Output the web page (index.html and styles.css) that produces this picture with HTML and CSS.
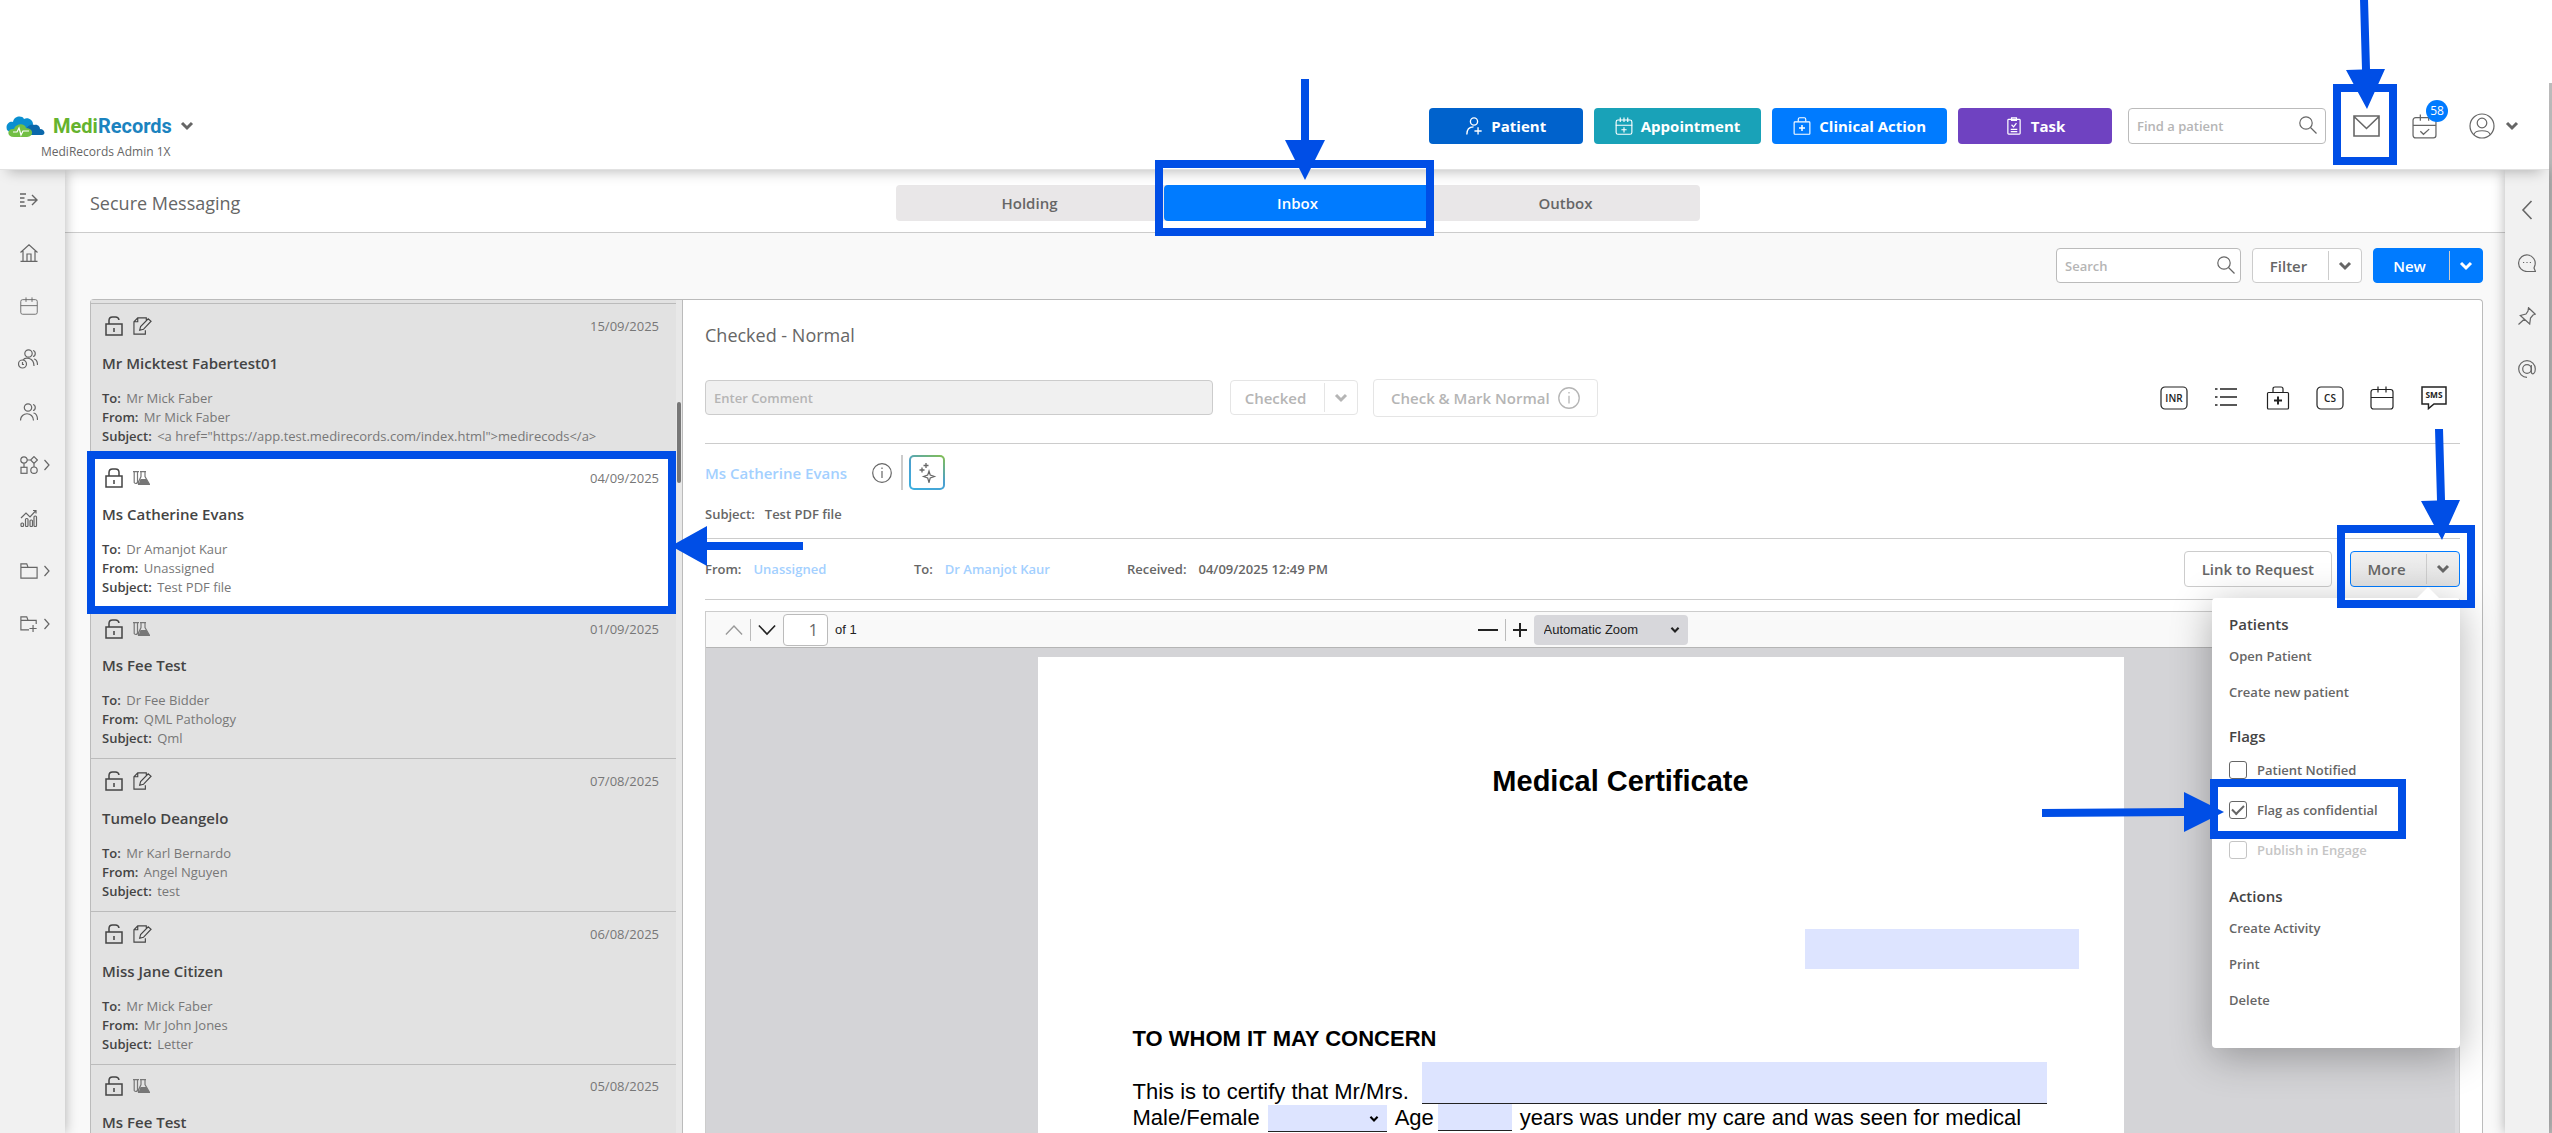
FILE: index.html
```html
<!DOCTYPE html>
<html lang="en">
<head>
    <meta charset="UTF-8">
    <meta name="viewport" content="width=device-width, initial-scale=1.0">
    <title>MediRecords - Secure Messaging</title>
    <link rel="stylesheet" href="styles.css">
</head>
<body>
    <!-- icon sprite -->
    <svg class="sprite" xmlns="http://www.w3.org/2000/svg">
        <symbol id="chevron" viewBox="0 0 14 10"><path d="M2 2l5 5 5-5" stroke-width="3"/></symbol>
        <symbol id="chevron-right" viewBox="0 0 6 12"><path d="M.5 1l4.500 5-4.500 5"/></symbol>
        <symbol id="expand" viewBox="0 0 18 14"><path d="M0 1h6M0 5h4.500M0 9h4.500M0 13h6M7.500 7h9.500M12 2l5 5-5 5" stroke-width="1.400"/></symbol>
        <symbol id="home" viewBox="0 0 18 18"><path d="M.5 8.500L9 .8l8.500 7.700M3 7v10M15 7v10M.5 17.300h17M7 17v-7h4v7"/></symbol>
        <symbol id="calendar" viewBox="0 0 24 24"><rect x="1" y="3.500" width="22" height="19.500" rx="2.500"/><path d="M1 11.500h22M8 .5v6M16 .5v6"/></symbol>
        <symbol id="calendar-check" viewBox="0 0 24 24"><rect x="1" y="3.500" width="22" height="19.500" rx="2.500"/><path d="M1 11h22M8 .5v6M16 .5v6M8 16.500l3 3 5.500-5"/></symbol>
        <symbol id="calendar-plus" viewBox="0 0 24 24"><rect x="1.500" y="4" width="21" height="19" rx="2.500"/><path d="M1 11h22M7 .5v6M12 .5v6M17 .5v6M12 13.500v7M8.500 17h7"/></symbol>
        <symbol id="users-clock" viewBox="0 0 20 20"><circle cx="10.500" cy="4.500" r="3.700"/><path d="M15 1.500c3 .5 3 5.500 0 6M5 11c2-3 11-3 11 6M16 10c2.500.5 3.500 3 3.500 6"/><circle cx="4.500" cy="15" r="4"/><path d="M4.500 13v2.500h1.500"/></symbol>
        <symbol id="users" viewBox="0 0 18 18"><circle cx="8" cy="4.500" r="3.700"/><path d="M13 1.500c3 .5 3 5.500 0 6M.5 17.500c0-9 13-9 13 0M13.500 10c3 .5 4 3 4 7"/></symbol>
        <symbol id="nodes" viewBox="0 0 18 18"><circle cx="4" cy="4" r="3.200"/><path d="M14 .6L17.400 4 14 7.400 10.600 4zM7 4h3.500M4 7.300V11M14 7.500V11"/><rect x="1" y="11.300" width="6" height="6"/><circle cx="14" cy="14.200" r="3.200"/></symbol>
        <symbol id="chart" viewBox="0 0 18 18"><path d="M1 9l5-5 4 4 5.500-6M13 1.500h3v3"/><rect x="1" y="14" width="2.500" height="3.500" rx="1"/><rect x="5.500" y="9.500" width="2.500" height="8" rx="1"/><rect x="10" y="11" width="2.500" height="6.500" rx="1"/><rect x="14" y="7" width="2.500" height="10.500" rx="1"/></symbol>
        <symbol id="folder" viewBox="0 0 20 18"><path d="M1 17V1h6.500l1.500 4h10v12zM1 5h8" stroke-width="1.300"/></symbol>
        <symbol id="folder-plus" viewBox="0 0 20 18"><path d="M10 15.500H1V1h6.500l1.500 4h9v4M1 5h8M14.500 10v8M10.500 14h8" stroke-width="1.300"/></symbol>
        <symbol id="user-plus" viewBox="0 0 18 20"><circle cx="9" cy="5" r="4"/><path d="M1 19.500c0-6 3-8.500 7.500-8.500M13.500 11.500v8M9.500 15.500h8"/></symbol>
        <symbol id="bag" viewBox="0 0 24 24"><rect x="1.500" y="6.500" width="21" height="16.500" rx="1"/><path d="M7 6V3q0-2 2-2h6q2 0 2 2v3"/><path d="M12 10.500v8M8 14.500h8" stroke-width="2"/></symbol>
        <symbol id="clipboard" viewBox="0 0 18 22"><rect x="1.500" y="3" width="15" height="18" rx="1"/><path d="M6 1h6v3H6zM6 9.500l2.500 2.500L12 7.500M5 15h8M5 18h8"/></symbol>
        <symbol id="search" viewBox="0 0 18 18"><circle cx="7" cy="7" r="6.200"/><path d="M11.500 11.500l6 6"/></symbol>
        <symbol id="mail" viewBox="0 0 27 22"><path d="M1 1h25v20H1zM1 1.500l12.500 12 12.500-12" stroke-width="1.600"/></symbol>
        <symbol id="user" viewBox="0 0 26 26"><circle cx="13" cy="13" r="12"/><circle cx="13" cy="10" r="4.800"/><path d="M5 21.500c1-5 15-5 16 0"/></symbol>
        <symbol id="back" viewBox="0 0 11 20"><path d="M10 1L1.500 10l8.500 9" stroke-width="1.600"/></symbol>
        <symbol id="chat" viewBox="0 0 18 18"><path d="M17.500 17.500h-8.500A8.300 8.300 0 1 1 17 11l-1 3zM5 8.500h1.200M8.400 8.500h1.200M11.800 8.500H13"/></symbol>
        <symbol id="pin" viewBox="0 0 18 18"><path d="M10.500.7l6.800 6.500-2.300.8-2.500 3-.8 6L2.300 8.500l5.700-1.500 2-3zM6.500 12L.5 17.500"/></symbol>
        <symbol id="at" viewBox="0 0 18 18"><circle cx="9" cy="9" r="4.300"/><path d="M13.300 5v7.500c1 2.500 4 1.500 4-3.500a8.300 8.300 0 1 0-8.300 8.300"/></symbol>
        <symbol id="lock" viewBox="0 0 18 20"><rect x="1" y="8" width="16" height="11" stroke-width="1.500"/><path d="M4 8V4.500q0-3.500 3.500-3.500h3q3.500 0 3.500 3.500V8M9 12v4" stroke-width="1.500"/></symbol>
        <symbol id="unlock" viewBox="0 0 18 20"><rect x="1" y="8" width="16" height="11" stroke-width="1.500"/><path d="M4 8V4.500q0-3.500 3.500-3.500h3q3 0 3.500 3M9 12v4" stroke-width="1.500"/></symbol>
        <symbol id="edit" viewBox="0 0 20 19"><path d="M14 4V1H5L1 5v13h12v-4M5 1v4H1M7 14l1-4 8-8 3 2.500-8 8.500z" stroke-width="1.200"/></symbol>
        <symbol id="flask" viewBox="0 0 17 14"><path d="M0 .7h6M1.200 1v10.500q1.500 2 3.300 0V1M7 .7h6M8 1v4.500L5.500 11v2.300h11L12 5.500V1" stroke-width="1.200"/><path class="solid" d="M7.500 8h6l3 5.500h-11z"/></symbol>
        <symbol id="info" viewBox="0 0 20 20"><circle cx="10" cy="10" r="9.300"/><path d="M10 8v7M10 4.500v1.500"/></symbol>
        <symbol id="sparkle" viewBox="0 0 16 20"><path d="M10 8l1.200 4 4.300 1.500-4.300 1.500L10 19.500 8.700 15l-4.200-1.500L8.700 12z"/><path d="M7 0v5M4.500 2.500h5M3 4.500v5M.5 7h5" stroke-width="1.300"/></symbol>
        <symbol id="inr" viewBox="0 0 28 24"><rect x="1" y="1" width="26" height="22" rx="4"/><text x="14" y="16" font-size="10">INR</text></symbol>
        <symbol id="cs" viewBox="0 0 28 24"><rect x="1" y="1" width="26" height="22" rx="4"/><text x="14" y="16" font-size="10">CS</text></symbol>
        <symbol id="sms" viewBox="0 0 28 26"><path d="M1 1h26v18.500H14l-6 5v-5H1z" stroke-width="1.600"/><text class="heavy" x="14" y="13.500" font-size="9">SMS</text></symbol>
        <symbol id="list" viewBox="0 0 22 20"><path d="M0 2h2.500M5 2h17M0 10h2.500M5 10h17M0 18h2.500M5 18h17" stroke-width="1.600"/></symbol>
        <symbol id="up" viewBox="0 0 20 12"><path d="M1 11l9-9.500 9 9.500" stroke-width="1.500"/></symbol>
        <symbol id="down" viewBox="0 0 20 12"><path d="M1 1l9 9.500L19 1" stroke-width="1.800"/></symbol>
        <symbol id="cloud" viewBox="0 0 39 21"><path fill="#0a8fd0" d="M1 14C-1 8 4 5 7 6 8 0 16-1 18 3c4-2 9 1 9 5l-3 10H6z"/><path fill="#0b68ab" d="M19 19c-1-6 5-12 9-10 4-1 6 2 6 4 5 0 6 6 2 6z"/><path fill="#72bf44" d="M8 21C0 21 1 12 8 13c2-6 11-6 12-1 8 0 8 9 1 9z"/><path d="M7 16h4l2-4 2 7 2-4h6" stroke="#fff" stroke-width="1.200"/></symbol>
    </svg>

    <div class="app">
        <header class="header">
            <div class="brand">
                <div class="brand-row">
                    <svg class="icon cloud"><use href="#cloud"/></svg>
                    <span class="brand-name"><span class="green">Medi</span>Records</span>
                    <button class="plain" aria-label="Switch practice"><svg class="icon chevron"><use href="#chevron"/></svg></button>
                </div>
                <div class="brand-sub">MediRecords Admin 1X</div>
            </div>
            <nav class="quick">
                <button class="btn-fill patient"><svg class="icon s18"><use href="#user-plus"/></svg>Patient</button>
                <button class="btn-fill appointment"><svg class="icon s18"><use href="#calendar-plus"/></svg>Appointment</button>
                <button class="btn-fill clinical"><svg class="icon s18"><use href="#bag"/></svg>Clinical Action</button>
                <button class="btn-fill task"><svg class="icon s18"><use href="#clipboard"/></svg>Task</button>
            </nav>
            <div class="search find">
                <input type="text" placeholder="Find a patient" aria-label="Find a patient">
                <svg class="icon s18"><use href="#search"/></svg>
            </div>
            <div class="header-icons">
                <a href="#" class="mail" aria-label="Messages">
                    <svg class="icon"><use href="#mail"/></svg>
                    <span class="callout callout-mail"></span>
                    <svg class="arrow arrow-mail" viewBox="0 0 40 110"><path d="M14 0h8l2 70h15L21 110 0 71l16-.5z"/></svg>
                </a>
                <a href="#" class="tasks" aria-label="Tasks">
                    <svg class="icon"><use href="#calendar-check"/></svg>
                    <span class="badge">58</span>
                </a>
                <button class="plain account" aria-label="Account">
                    <svg class="icon"><use href="#user"/></svg>
                    <svg class="icon chevron"><use href="#chevron"/></svg>
                </button>
            </div>
        </header>

        <div class="body">
            <nav class="rail rail-left">
                <a href="#" aria-label="Expand"><svg class="icon s18"><use href="#expand"/></svg></a>
                <a href="#" aria-label="Home"><svg class="icon s18"><use href="#home"/></svg></a>
                <a href="#" aria-label="Calendar"><svg class="icon s18"><use href="#calendar"/></svg></a>
                <a href="#" aria-label="Waiting room"><svg class="icon s20"><use href="#users-clock"/></svg></a>
                <a href="#" aria-label="Patients"><svg class="icon s18"><use href="#users"/></svg></a>
                <a href="#" aria-label="Clinical"><svg class="icon s18"><use href="#nodes"/></svg><svg class="icon more-arrow"><use href="#chevron-right"/></svg></a>
                <a href="#" aria-label="Reports"><svg class="icon s18"><use href="#chart"/></svg></a>
                <a href="#" aria-label="Folders"><svg class="icon s18"><use href="#folder"/></svg><svg class="icon more-arrow"><use href="#chevron-right"/></svg></a>
                <a href="#" aria-label="Add folder"><svg class="icon s18"><use href="#folder-plus"/></svg><svg class="icon more-arrow"><use href="#chevron-right"/></svg></a>
            </nav>

            <main class="main">
                <div class="title-bar">
                    <h1>Secure Messaging</h1>
                    <div class="tabs">
                        <button class="tab">Holding</button>
                        <button class="tab active">Inbox
                            <span class="callout callout-tab"></span>
                            <svg class="arrow arrow-tab" viewBox="0 0 40 101"><path d="M16 0h8v61h16L20 101 0 61h16z"/></svg>
                        </button>
                        <button class="tab">Outbox</button>
                    </div>
                </div>

                <div class="toolbar">
                    <div class="search">
                        <input type="text" placeholder="Search" aria-label="Search">
                        <svg class="icon s18"><use href="#search"/></svg>
                    </div>
                    <div class="split">
                        <button>Filter</button>
                        <button class="toggle" aria-label="Filter options"><svg class="icon chevron"><use href="#chevron"/></svg></button>
                    </div>
                    <div class="split primary">
                        <button>New</button>
                        <button class="toggle" aria-label="New options"><svg class="icon chevron"><use href="#chevron"/></svg></button>
                    </div>
                </div>

                <div class="card">
                    <div class="list">
                        <div class="messages">
                            <article class="message">
                                <div class="message-top">
                                    <svg class="icon lock"><use href="#unlock"/></svg>
                                    <svg class="icon edit"><use href="#edit"/></svg>
                                    <time>15/09/2025</time>
                                </div>
                                <h2>Mr Micktest Fabertest01</h2>
                                <p><b>To:</b> Mr Mick Faber</p>
                                <p><b>From:</b> Mr Mick Faber</p>
                                <p><b>Subject:</b> &lt;a href="https://app.test.medirecords.com/index.html"&gt;medirecods&lt;/a&gt;</p>
                            </article>
                            <article class="message selected">
                                <div class="message-top">
                                    <svg class="icon lock"><use href="#lock"/></svg>
                                    <svg class="icon flask"><use href="#flask"/></svg>
                                    <time>04/09/2025</time>
                                </div>
                                <h2>Ms Catherine Evans</h2>
                                <p><b>To:</b> Dr Amanjot Kaur</p>
                                <p><b>From:</b> Unassigned</p>
                                <p><b>Subject:</b> Test PDF file</p>
                                <span class="callout callout-message"></span>
                                <svg class="arrow arrow-message" viewBox="0 0 132 40"><path d="M0 20L36 0v16h96v8H36v16z"/></svg>
                            </article>
                            <article class="message">
                                <div class="message-top">
                                    <svg class="icon lock"><use href="#unlock"/></svg>
                                    <svg class="icon flask"><use href="#flask"/></svg>
                                    <time>01/09/2025</time>
                                </div>
                                <h2>Ms Fee Test</h2>
                                <p><b>To:</b> Dr Fee Bidder</p>
                                <p><b>From:</b> QML Pathology</p>
                                <p><b>Subject:</b> Qml</p>
                            </article>
                            <article class="message">
                                <div class="message-top">
                                    <svg class="icon lock"><use href="#unlock"/></svg>
                                    <svg class="icon edit"><use href="#edit"/></svg>
                                    <time>07/08/2025</time>
                                </div>
                                <h2>Tumelo Deangelo</h2>
                                <p><b>To:</b> Mr Karl Bernardo</p>
                                <p><b>From:</b> Angel Nguyen</p>
                                <p><b>Subject:</b> test</p>
                            </article>
                            <article class="message">
                                <div class="message-top">
                                    <svg class="icon lock"><use href="#unlock"/></svg>
                                    <svg class="icon edit"><use href="#edit"/></svg>
                                    <time>06/08/2025</time>
                                </div>
                                <h2>Miss Jane Citizen</h2>
                                <p><b>To:</b> Mr Mick Faber</p>
                                <p><b>From:</b> Mr John Jones</p>
                                <p><b>Subject:</b> Letter</p>
                            </article>
                            <article class="message">
                                <div class="message-top">
                                    <svg class="icon lock"><use href="#unlock"/></svg>
                                    <svg class="icon flask"><use href="#flask"/></svg>
                                    <time>05/08/2025</time>
                                </div>
                                <h2>Ms Fee Test</h2>
                            </article>
                        </div>
                        <div class="track"><div class="thumb"></div></div>
                    </div>

                    <section class="detail">
                        <h2 class="status">Checked - Normal</h2>
                        <div class="review">
                            <input class="comment" type="text" placeholder="Enter Comment" aria-label="Comment" disabled>
                            <div class="split disabled">
                                <button disabled>Checked</button>
                                <button class="toggle" aria-label="Checked options" disabled><svg class="icon chevron"><use href="#chevron"/></svg></button>
                            </div>
                            <button class="btn mark" disabled>Check &amp; Mark Normal<svg class="icon s22"><use href="#info"/></svg></button>
                            <div class="shortcuts">
                                <a href="#" aria-label="INR"><svg class="icon wide"><use href="#inr"/></svg></a>
                                <a href="#" aria-label="List"><svg class="icon s22"><use href="#list"/></svg></a>
                                <a href="#" aria-label="Clinical action"><svg class="icon s24"><use href="#bag"/></svg></a>
                                <a href="#" aria-label="CS"><svg class="icon wide"><use href="#cs"/></svg></a>
                                <a href="#" aria-label="Appointment"><svg class="icon s24"><use href="#calendar"/></svg></a>
                                <a href="#" aria-label="SMS"><svg class="icon wide"><use href="#sms"/></svg></a>
                            </div>
                        </div>
                        <div class="patient-row">
                            <div class="patient-name">
                                <a href="#">Ms Catherine Evans</a>
                                <svg class="icon s20"><use href="#info"/></svg>
                                <button class="ai" aria-label="AI summary"><svg class="icon s20"><use href="#sparkle"/></svg></button>
                            </div>
                            <p class="subject">Subject:<span>Test PDF file</span></p>
                        </div>
                        <div class="meta">
                            <span class="from">From:<a href="#">Unassigned</a></span>
                            <span class="to">To:<a href="#">Dr Amanjot Kaur</a></span>
                            <span>Received:<span class="value">04/09/2025 12:49 PM</span></span>
                            <button class="btn link">Link to Request</button>
                            <div class="more">
                                <div class="split open">
                                    <button>More</button>
                                    <button class="toggle" aria-label="More options"><svg class="icon chevron"><use href="#chevron"/></svg></button>
                                </div>
                                <span class="callout callout-more"></span>
                                <svg class="arrow arrow-more" viewBox="0 0 40 111"><path d="M14 0h8l2 71h15L21 111 0 72l16-.5z"/></svg>
                                <div class="menu">
                                    <h3>Patients</h3>
                                    <a href="#">Open Patient</a>
                                    <a href="#">Create new patient</a>
                                    <h3>Flags</h3>
                                    <label><input type="checkbox">Patient Notified</label>
                                    <label>
                                        <input type="checkbox" checked>Flag as confidential
                                        <span class="callout callout-flag"></span>
                                        <svg class="arrow arrow-flag" viewBox="0 0 182 40"><path d="M0 17l142-1V0l40 20-40 20V24L0 25z"/></svg>
                                    </label>
                                    <label class="off"><input type="checkbox" disabled>Publish in Engage</label>
                                    <h3>Actions</h3>
                                    <a href="#">Create Activity</a>
                                    <a href="#">Print</a>
                                    <a href="#">Delete</a>
                                </div>
                            </div>
                        </div>

                        <div class="viewer">
                            <div class="viewer-bar">
                                <div class="pager">
                                    <button class="plain dim" aria-label="Previous page"><svg class="icon step"><use href="#up"/></svg></button>
                                    <span class="sep"></span>
                                    <button class="plain" aria-label="Next page"><svg class="icon step"><use href="#down"/></svg></button>
                                    <input type="text" value="1" aria-label="Page">
                                    <span>of 1</span>
                                </div>
                                <div class="zoom">
                                    <button class="plain minus" aria-label="Zoom out"></button>
                                    <span class="sep"></span>
                                    <button class="plain plus" aria-label="Zoom in"></button>
                                    <div class="select">
                                        <select aria-label="Zoom"><option>Automatic Zoom</option></select>
                                        <svg class="icon caret"><use href="#chevron"/></svg>
                                    </div>
                                </div>
                            </div>
                            <div class="pages">
                                <div class="page">
                                    <h2>Medical Certificate</h2>
                                    <input class="date" type="text" aria-label="Date">
                                    <h3>TO WHOM IT MAY CONCERN</h3>
                                    <div class="line first">
                                        <label for="name">This is to certify that Mr/Mrs.</label>
                                        <input id="name" type="text">
                                    </div>
                                    <div class="line">
                                        <label for="sex">Male/Female</label>
                                        <div class="select sex">
                                            <select id="sex"><option></option></select>
                                            <svg class="icon caret"><use href="#chevron"/></svg>
                                        </div>
                                        <label for="age">Age</label>
                                        <input id="age" type="text">
                                        <span>years was under my care and was seen for medical</span>
                                    </div>
                                </div>
                            </div>
                        </div>
                    </section>
                </div>
            </main>

            <nav class="rail rail-right">
                <a href="#" aria-label="Open panel"><svg class="icon s20"><use href="#back"/></svg></a>
                <a href="#" aria-label="Chat"><svg class="icon s18"><use href="#chat"/></svg></a>
                <a href="#" aria-label="Pinned"><svg class="icon s18"><use href="#pin"/></svg></a>
                <a href="#" aria-label="Mentions"><svg class="icon s18"><use href="#at"/></svg></a>
            </nav>
        </div>
    </div>
</body>
</html>
```
FILE: styles.css
```css
* {
    box-sizing: border-box;
}
body {
    margin: 0;
    padding-top: 83px;
    height: 100vh;
    overflow: hidden;
    background: #fff;
    font-family: "Open Sans", "Noto Sans", sans-serif;
    font-size: 13px;
    color: #666;
}
h1, h2, h3, p {
    margin: 0;
}
a {
    color: inherit;
    text-decoration: none;
}
button, input, select {
    font-family: inherit;
    color: inherit;
}
button {
    cursor: pointer;
}
.plain {
    background: none;
    border: none;
    padding: 0;
    display: flex;
    align-items: center;
}

/* icons */
.sprite {
    display: none;
}
.icon {
    display: block;
    flex: none;
    fill: none;
    stroke: currentColor;
    stroke-width: 1.2;
}
symbol text {
    fill: currentColor;
    stroke: none;
    text-anchor: middle;
    font-weight: 600;
}
symbol .heavy {
    font-weight: 700;
}
symbol .solid {
    fill: currentColor;
    stroke: none;
}
.s18 { width: 18px; height: 18px; }
.s20 { width: 20px; height: 20px; }
.s22 { width: 22px; height: 22px; }
.s24 { width: 24px; height: 24px; }
.chevron {
    width: 14px;
    height: 10px;
}

/* layout */
.app {
    height: 100%;
    display: flex;
    flex-direction: column;
    border-right: 3px solid #bbb;
}
.body {
    flex: 1;
    min-height: 0;
    display: flex;
}
.main {
    flex: 1;
    min-width: 0;
    display: flex;
    flex-direction: column;
    background: #f9f9f9;
}

/* header */
.header {
    position: relative;
    z-index: 3;
    height: 87px;
    flex: none;
    display: flex;
    align-items: center;
    padding: 0 30px 0 6px;
    background: #fff;
    border-bottom: 1px solid #e2e2e2;
    box-shadow: 0 10px 12px -8px rgba(0, 0, 0, 0.25);
}
.brand {
    align-self: flex-start;
    margin-right: auto;
    padding-top: 31px;
}
.brand-row {
    display: flex;
    align-items: center;
    height: 24px;
    gap: 8px;
}
.cloud {
    width: 39px;
    height: 21px;
    stroke: none;
}
.brand-name {
    font-family: Roboto, sans-serif;
    font-size: 20px;
    font-weight: 700;
    color: #1b83bf;
}
.green {
    color: #65b32e;
}
.brand-sub {
    margin-top: 5px;
    padding-left: 35px;
    font-size: 12px;
    line-height: 18px;
}
.quick {
    display: flex;
    gap: 11px;
}
.btn-fill {
    display: flex;
    align-items: center;
    justify-content: center;
    gap: 8px;
    height: 36px;
    min-width: 154px;
    padding: 0 21px;
    border: none;
    border-radius: 4px;
    color: #fff;
    font-size: 15px;
    font-weight: 700;
}
.btn-fill .icon {
    stroke-width: 1.5;
}
.patient { background: #0062cc; }
.appointment { background: #19a2b8; }
.clinical { background: #007bff; }
.task { background: #6f42c1; }
.search {
    position: relative;
    width: 185px;
}
.search input {
    width: 100%;
    height: 35px;
    padding: 0 32px 0 8px;
    border: 1px solid #bbb;
    border-radius: 4px;
    background: #fff;
    font-size: 13px;
}
.search .icon {
    position: absolute;
    right: 6px;
    top: 8px;
}
.find {
    width: 198px;
    margin-left: 16px;
}
.find input {
    height: 36px;
}
.find .icon {
    right: 9px;
}
input::placeholder {
    color: #b5b5b5;
    font-weight: 600;
    opacity: 1;
}
.header-icons {
    display: flex;
    align-items: center;
    gap: 32px;
    margin-left: 27px;
}
.mail, .tasks {
    position: relative;
}
.mail .icon {
    width: 27px;
    height: 22px;
}
.tasks .icon {
    width: 25px;
    height: 25px;
}
.badge {
    position: absolute;
    left: 14px;
    top: -14px;
    width: 22px;
    height: 22px;
    border-radius: 50%;
    background: #007bff;
    color: #fff;
    font-size: 12px;
    line-height: 22px;
    text-align: center;
}
.account {
    gap: 10px;
}
.account .icon:first-child {
    width: 26px;
    height: 26px;
}

/* side rails */
.rail {
    position: relative;
    z-index: 2;
    flex: none;
    display: flex;
    flex-direction: column;
    background: #f1f1f1;
    box-shadow: 0 0 12px rgba(0, 0, 0, 0.3);
}
.rail a {
    display: flex;
    align-items: center;
    height: 53px;
}
.rail-left {
    width: 65px;
    padding: 3px 0 0 20px;
}
.rail-left a {
    gap: 6px;
}
.rail-left .s20 {
    margin-left: -2px;
}
.more-arrow {
    width: 6px;
    height: 12px;
}
.rail-right {
    width: 44px;
    padding-top: 13px;
}
.rail-right a {
    justify-content: center;
}

/* title bar and tabs */
.title-bar {
    display: grid;
    grid-template-columns: 1fr auto 1fr;
    align-items: center;
    height: 63px;
    padding: 4px 0 0 25px;
    background: #fff;
    border-bottom: 1px solid #ccc;
}
.title-bar h1, .status {
    font-size: 18px;
    font-weight: 400;
    line-height: 24px;
}
.tabs {
    display: flex;
    border-radius: 4px;
    background: #e9e7e8;
}
.tab {
    position: relative;
    width: 268px;
    height: 36px;
    border: none;
    border-radius: 4px;
    background: none;
    font-size: 15px;
    font-weight: 600;
}
.tab.active {
    background: #007bff;
    color: #fff;
}

/* toolbar */
.toolbar {
    display: flex;
    justify-content: flex-end;
    gap: 11px;
    padding: 15px 22px 16px;
}
.split, .btn {
    border: 1px solid #ccc;
    border-radius: 4px;
    background: #fff;
    font-size: 15px;
    font-weight: 600;
}
.split {
    display: flex;
    width: 110px;
    height: 35px;
}
.split button {
    flex: 1;
    padding: 0 4px 0 0;
    border: none;
    background: none;
    font-size: 15px;
    font-weight: 600;
}
.split .toggle {
    flex: 0 0 33px;
    display: flex;
    align-items: center;
    justify-content: center;
    margin: 2px 0;
    padding: 0;
    border-left: 1px solid #ccc;
}
.primary {
    background: #007bff;
    border-color: #007bff;
    color: #fff;
}
.disabled {
    width: 128px;
}
.disabled, .mark {
    border-color: #e5e5e5;
    color: #b5b5b5;
}
.split.disabled .toggle {
    border-color: #e5e5e5;
}

/* card */
.card {
    flex: 1;
    min-height: 0;
    display: flex;
    margin: 0 22px 0 25px;
    border: 1px solid #bbb;
    border-bottom: none;
    border-radius: 4px 4px 0 0;
    background: #fff;
}
.list {
    flex: 0 0 592px;
    display: flex;
    border-right: 1px solid #bbb;
}
.messages {
    flex: 1;
    overflow-y: clip;
    padding-top: 3px;
    background: #e2e2e2;
}
.track {
    width: 6px;
    padding: 102px 1px 0;
    background: #e8e8e8;
}
.thumb {
    height: 81px;
    border-radius: 2px;
    background: #777;
}
.message {
    position: relative;
    padding: 10px 17px 10px 11px;
    border-top: 1px solid #bbb;
}
.selected {
    background: #fff;
}
.message-top {
    display: flex;
    align-items: center;
    padding-left: 3px;
    color: #444;
}
.message-top time {
    margin-left: auto;
    line-height: 22px;
    color: #777;
}
.lock {
    width: 18px;
    height: 20px;
    margin-right: 10px;
}
.edit {
    width: 19px;
    height: 24px;
}
.flask {
    width: 17px;
    height: 14px;
    color: #777;
}
.message h2 {
    margin: 14px 0 15px;
    font-size: 15px;
    font-weight: 600;
    line-height: 22px;
    color: #444;
}
.message p {
    line-height: 19px;
    color: #777;
}
.message b {
    margin-right: 2px;
    font-weight: 600;
    color: #444;
}

/* message detail */
.detail {
    flex: 1;
    min-width: 0;
    display: flex;
    flex-direction: column;
    padding: 23px 22px 0;
    font-weight: 600;
}
.review {
    flex: none;
    display: flex;
    align-items: center;
    height: 97px;
    padding-top: 5px;
    border-bottom: 1px solid #ccc;
}
.comment {
    width: 508px;
    height: 35px;
    margin-right: 17px;
    padding: 0 8px;
    border: 1px solid #ccc;
    border-radius: 4px;
    background: #f0f0f0;
    font-size: 13px;
}
.btn {
    height: 36px;
    padding: 0 17px;
}
.mark {
    display: flex;
    align-items: center;
    gap: 8px;
    height: 38px;
    margin-left: 15px;
}
.shortcuts {
    display: flex;
    margin-left: auto;
    color: #222;
}
.shortcuts a {
    display: flex;
    justify-content: center;
    width: 52px;
}
.wide {
    width: 28px;
    height: 24px;
}
.patient-row {
    padding: 11px 0 15px;
    border-bottom: 1px solid #ccc;
}
.patient-name {
    display: flex;
    align-items: center;
    height: 35px;
    font-size: 15px;
}
.patient-name a, .meta > span a {
    color: #a3d0ff;
}
.patient-name > .icon {
    margin: 0 8px 0 25px;
}
.ai {
    position: relative;
    display: flex;
    align-items: center;
    justify-content: center;
    width: 36px;
    height: 35px;
    margin-left: 9px;
    border: 2px solid transparent;
    border-radius: 5px;
    background: linear-gradient(#fff, #fff) padding-box, linear-gradient(30deg, #3bb0e0, #4a9fd0 50%, #86c04c) border-box;
}
.ai::before {
    content: "";
    position: absolute;
    left: -10px;
    top: -2px;
    height: 35px;
    border-left: 2px solid #ccc;
}
.subject {
    margin-top: 15px;
    line-height: 18px;
}
.subject span {
    margin-left: 10px;
}
.meta {
    flex: none;
    display: flex;
    align-items: center;
    height: 61px;
    border-bottom: 1px solid #ccc;
}
.meta > span a, .meta .value {
    margin-left: 12px;
}
.from {
    width: 209px;
}
.to {
    width: 213px;
}
.link {
    margin: 0 18px 0 auto;
}
.more {
    position: relative;
}
.open {
    height: 36px;
    border-color: #007bff;
    background: linear-gradient(#f0f0f0, #e2e2e2);
}
.menu {
    position: absolute;
    z-index: 5;
    right: 0;
    top: calc(100% + 11px);
    width: 248px;
    padding: 16px 17px 30px;
    border-radius: 4px;
    background: #fff;
    box-shadow: 0 8px 40px rgba(0, 0, 0, 0.3);
}
.menu::before {
    content: "";
    position: absolute;
    right: 21px;
    top: -11px;
    border: 11px solid transparent;
    border-top: none;
    border-bottom-color: #fff;
}
.menu h3 {
    margin: 16px 0 4px;
    font-size: 15px;
    font-weight: 600;
    line-height: 20px;
    color: #444;
}
.menu h3:first-child {
    margin-top: 0;
}
.menu a {
    display: block;
    line-height: 36px;
}
.menu label {
    position: relative;
    display: flex;
    align-items: center;
    height: 40px;
}
.menu input {
    appearance: none;
    display: flex;
    align-items: center;
    justify-content: center;
    width: 18px;
    height: 18px;
    margin: 0 10px 0 0;
    border: 1px solid #666;
    border-radius: 3px;
}
.menu input:checked::after {
    content: "";
    width: 10px;
    height: 5px;
    margin-top: -4px;
    border: solid #666;
    border-width: 0 0 2px 2px;
    transform: rotate(-45deg);
}
.menu .off {
    color: #c5c5c5;
}
.menu .off input {
    border-color: #c5c5c5;
}

/* pdf viewer */
.viewer {
    flex: 1;
    min-height: 0;
    overflow: hidden;
    margin-top: 11px;
    border: 1px solid #ccc;
    border-bottom: none;
    background: #d4d4d7;
    font-family: "Liberation Sans", Arial, sans-serif;
    font-weight: 400;
    color: #000;
}
.viewer-bar {
    display: grid;
    grid-template-columns: 1fr auto 1fr;
    align-items: center;
    height: 36px;
    border-bottom: 1px solid #b5b5b5;
    background: #f9f9f9;
    color: #222;
}
.pager, .zoom {
    display: flex;
    align-items: center;
    gap: 7px;
}
.pager {
    padding-left: 19px;
}
.pager .dim {
    color: #999;
}
.step {
    width: 18px;
    height: 12px;
}
.pager input {
    width: 45px;
    height: 32px;
    padding: 0 9px;
    border: 1px solid #bbb;
    border-radius: 4px;
    font-family: "Open Sans", sans-serif;
    font-size: 16px;
    text-align: right;
    color: #666;
}
.sep {
    width: 1px;
    height: 22px;
    background: #bbb;
}
.minus, .plus {
    width: 20px;
    height: 20px;
    background: linear-gradient(#222, #222) center / 100% 2px no-repeat;
}
.plus {
    width: 14px;
    background: linear-gradient(#222, #222) center / 100% 2px no-repeat, linear-gradient(#222, #222) center / 2px 14px no-repeat;
}
.select {
    position: relative;
}
.select select {
    appearance: none;
    width: 154px;
    height: 30px;
    padding: 0 10px;
    border: none;
    border-radius: 4px;
    background: #d7d7db;
    font-size: 13px;
}
.caret {
    position: absolute;
    right: 8px;
    top: 11px;
    width: 10px;
    height: 8px;
    pointer-events: none;
}
.pages {
    height: calc(100% - 36px);
    padding-top: 9px;
    border-right: 4px solid #dcdcdf;
    overflow: hidden;
}
.page {
    max-width: 1086px;
    height: 100%;
    margin: 0 auto;
    padding: 107px 45px 0 95px;
    background: #fff;
    font-size: 22px;
}
.page h2 {
    padding-left: 30px;
    font-size: 29px;
    line-height: 34px;
    text-align: center;
}
.page h3 {
    margin: 57px 0 10px;
    font-size: 22px;
    line-height: 26px;
}
.page input, .page select {
    border: none;
    border-radius: 0;
    background: #dde4ff;
    font-size: 20px;
}
.date {
    display: block;
    width: 274px;
    height: 40px;
    margin: 131px 0 0 auto;
}
.line {
    display: flex;
    gap: 8px;
    line-height: 28px;
}
.first {
    align-items: flex-end;
    line-height: 24px;
}
.first input {
    width: 625px;
    height: 42px;
    margin-left: 5px;
}
.line .sex select {
    width: 119px;
    height: 27px;
}
#age {
    width: 74px;
    height: 27px;
    margin-left: -4px;
}
.page .line input, .page .line select {
    border-bottom: 1px solid #222;
}

/* guide highlights and arrows */
.callout {
    position: absolute;
    z-index: 10;
    border: 8px solid #004ee6;
    pointer-events: none;
}
.arrow {
    position: absolute;
    z-index: 10;
    fill: #004ee6;
    pointer-events: none;
}
.callout-mail { inset: -31px -17px -28px -20px; }
.callout-tab { inset: -25px -2px -15px -9px; }
.callout-message { inset: -6px 0 -7px -4px; }
.callout-more { inset: -26px -15px -21px -13px; }
.callout-flag {
    left: -19px;
    top: -11px;
    width: 196px;
    height: 60px;
}
.arrow-mail {
    left: -7px;
    bottom: 28px;
    width: 40px;
    height: 110px;
}
.arrow-tab {
    left: 121px;
    bottom: 41px;
    width: 40px;
    height: 101px;
}
.arrow-message {
    left: 580px;
    top: 69px;
    width: 132px;
    height: 40px;
}
.arrow-more {
    right: -1px;
    bottom: 47px;
    width: 40px;
    height: 111px;
}
.arrow-flag {
    left: -187px;
    top: 2px;
    width: 182px;
    height: 40px;
}
```
